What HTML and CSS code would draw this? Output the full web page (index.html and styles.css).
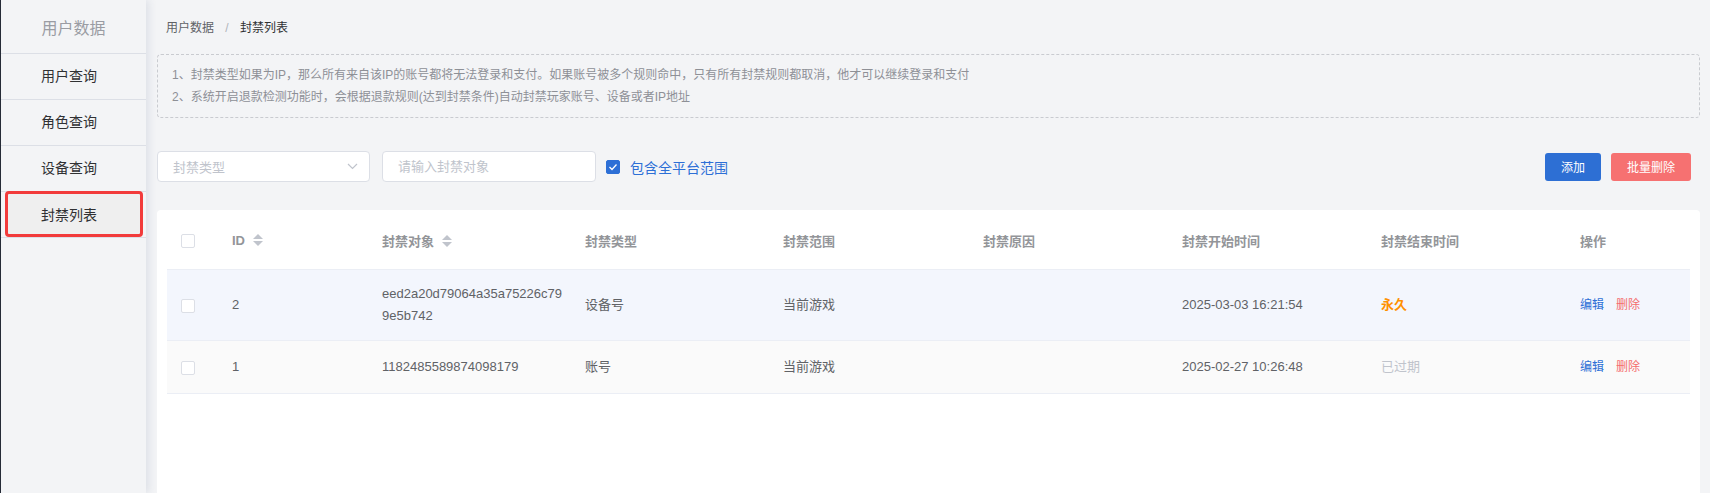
FILE: index.html
```html
<!DOCTYPE html>
<html lang="zh-CN">
<head>
    <meta charset="UTF-8">
    <meta name="viewport" content="width=device-width, initial-scale=1.0">
    <title>封禁列表</title>
    <link rel="stylesheet" href="styles.css">
</head>
<body>

<div class="layout">
    <aside class="sidebar">
        <div class="side-title">用户数据</div>
        <ul class="side-menu">
            <li>用户查询</li>
            <li>角色查询</li>
            <li>设备查询</li>
            <li class="active"><span>封禁列表</span></li>
        </ul>
    </aside>

    <main class="main">
        <div class="breadcrumb">
            <span class="crumb">用户数据</span>
            <span class="sep">/</span>
            <span class="crumb current">封禁列表</span>
        </div>

        <div class="notice">
            <p>1、封禁类型如果为IP，那么所有来自该IP的账号都将无法登录和支付。如果账号被多个规则命中，只有所有封禁规则都取消，他才可以继续登录和支付</p>
            <p>2、系统开启退款检测功能时，会根据退款规则(达到封禁条件)自动封禁玩家账号、设备或者IP地址</p>
        </div>

        <div class="filter">
            <div class="select">
                <span>封禁类型</span>
                <svg width="11" height="7" viewBox="0 0 11 7"><polyline points="1,1 5.5,5.5 10,1" fill="none" stroke="#c0c4cc" stroke-width="1.2"/></svg>
            </div>
            <input class="input" type="text" placeholder="请输入封禁对象">
            <label class="check">
                <span class="box checked">
                    <svg width="10" height="8" viewBox="0 0 10 8"><polyline points="1.5,4 4,6.5 8.5,1.5" fill="none" stroke="#fff" stroke-width="1.3"/></svg>
                </span>
                包含全平台范围
            </label>
            <div class="actions">
                <button class="btn primary">添加</button>
                <button class="btn danger">批量删除</button>
            </div>
        </div>

        <div class="card">
            <table class="table">
                <colgroup>
                    <col style="width:55px">
                    <col style="width:150px">
                    <col style="width:203px">
                    <col style="width:198px">
                    <col style="width:200px">
                    <col style="width:199px">
                    <col style="width:199px">
                    <col style="width:199px">
                    <col style="width:120px">
                </colgroup>
                <thead>
                    <tr>
                        <th class="cb"><span class="box"></span></th>
                        <th>ID <span class="sort"><i class="up"></i><i class="down"></i></span></th>
                        <th>封禁对象 <span class="sort"><i class="up"></i><i class="down"></i></span></th>
                        <th>封禁类型</th>
                        <th>封禁范围</th>
                        <th>封禁原因</th>
                        <th>封禁开始时间</th>
                        <th>封禁结束时间</th>
                        <th>操作</th>
                    </tr>
                </thead>
                <tbody>
                    <tr class="current-row">
                        <td class="cb"><span class="box"></span></td>
                        <td>2</td>
                        <td class="hash">eed2a20d79064a35a75226c799e5b742</td>
                        <td>设备号</td>
                        <td>当前游戏</td>
                        <td></td>
                        <td>2025-03-03 16:21:54</td>
                        <td class="forever">永久</td>
                        <td><a class="link edit">编辑</a><a class="link del">删除</a></td>
                    </tr>
                    <tr class="striped">
                        <td class="cb"><span class="box"></span></td>
                        <td>1</td>
                        <td class="hash">1182485589874098179</td>
                        <td>账号</td>
                        <td>当前游戏</td>
                        <td></td>
                        <td>2025-02-27 10:26:48</td>
                        <td class="expired">已过期</td>
                        <td><a class="link edit">编辑</a><a class="link del">删除</a></td>
                    </tr>
                </tbody>
            </table>
        </div>
    </main>
</div>

</body>
</html>
```

FILE: styles.css
```css
html, body {
    height: 100%;
}
body {
    margin: 0;
    padding: 0;
    font-family: "Liberation Sans", Arial, "Noto Sans CJK SC", sans-serif;
    background-color: #f3f4f6;
    color: #606266;
    overflow: hidden;
}

.layout {
    display: flex;
    height: 100%;
    border-left: 1px solid #262b36;
}

/* sidebar */
.sidebar {
    width: 145px;
    flex-shrink: 0;
    background-color: #f3f4f6;
    box-shadow: 3px 0 8px rgba(40, 60, 110, 0.1);
    position: relative;
    z-index: 1;
}
.side-title {
    height: 53px;
    line-height: 57px;
    text-align: center;
    font-size: 16px;
    color: #9a9ca3;
    border-bottom: 1px solid #dcdfe6;
}
.side-menu {
    list-style: none;
    margin: 0;
    padding: 0;
}
.side-menu li {
    height: 45px;
    line-height: 45px;
    padding-left: 40px;
    font-size: 14px;
    color: #303133;
    border-bottom: 1px solid #dcdfe6;
}
.side-menu li.active {
    padding: 0;
    height: 46px;
    margin-top: -1px;
}
.side-menu li.active span {
    display: block;
    margin: 0 3px 0 4px;
    height: 40px;
    line-height: 42px;
    padding-left: 33px;
    background-color: #efefef;
    border: 3px solid #f23b3b;
    border-radius: 4px;
}

/* main */
.main {
    flex: 1;
    padding: 0 10px 0 11px;
    min-width: 0;
}
.breadcrumb {
    height: 54px;
    line-height: 56px;
    padding-left: 9px;
    font-size: 12px;
}
.breadcrumb .crumb {
    color: #606266;
}
.breadcrumb .current {
    color: #303133;
}
.breadcrumb .sep {
    margin: 0 8px;
    color: #b0b3ba;
}

.notice {
    border: 1px dashed #c9cbd0;
    border-radius: 4px;
    padding: 9px 14px;
    font-size: 12px;
    line-height: 22px;
    color: #8e9096;
}
.notice p {
    margin: 0;
}

.filter {
    display: flex;
    align-items: center;
    margin-top: 33px;
    height: 31px;
    padding-right: 9px;
}
.select, .input {
    box-sizing: border-box;
    width: 213px;
    height: 31px;
    border: 1px solid #dcdfe6;
    border-radius: 4px;
    background-color: #fff;
    font-family: inherit;
    font-size: 13px;
    color: #c0c4cc;
}
.select {
    display: flex;
    align-items: center;
    justify-content: space-between;
    padding: 0 11px 0 15px;
}
.input {
    margin-left: 12px;
    width: 214px;
    padding: 0 15px;
    outline: none;
}
.input::placeholder {
    color: #c0c4cc;
}
.check {
    display: flex;
    align-items: center;
    margin-left: 10px;
    font-size: 14px;
    color: #2d6fd6;
}
.box {
    display: inline-block;
    box-sizing: border-box;
    width: 14px;
    height: 14px;
    border: 1px solid #dcdfe6;
    border-radius: 2px;
    background-color: #fff;
    vertical-align: middle;
}
.box.checked {
    display: flex;
    align-items: center;
    justify-content: center;
    background-color: #2d6fd6;
    border-color: #2d6fd6;
    margin-right: 10px;
}
.actions {
    margin-left: auto;
    display: flex;
    gap: 10px;
}
.btn {
    height: 28px;
    border: none;
    border-radius: 3px;
    color: #fff;
    font-family: inherit;
    font-size: 12px;
    cursor: pointer;
}
.btn.primary {
    width: 56px;
    background-color: #2d6fd4;
}
.btn.danger {
    width: 80px;
    background-color: #f67171;
}

/* table */
.card {
    margin-top: 28px;
    background-color: #fff;
    border-radius: 4px;
    padding: 0 10px;
    height: 400px;
}
.table {
    width: 100%;
    table-layout: fixed;
    border-collapse: collapse;
    font-size: 13px;
}
.table th {
    height: 24px;
    padding: 18px 10px 17px;
    text-align: left;
    font-weight: bold;
    color: #939599;
    border-bottom: 1px solid #ebeef5;
}
.table td {
    height: 26px;
    padding: 13px 10px;
    line-height: 22px;
    color: #606266;
    border-bottom: 1px solid #ebeef5;
    vertical-align: middle;
}
.table .cb {
    padding-left: 14px;
    padding-right: 0;
}
.table th.cb .box {
    margin-top: 2px;
}
.hash {
    word-break: break-all;
}
.current-row td {
    background-color: #f3f6fd;
}
.striped td {
    background-color: #fafafa;
}
.sort {
    display: inline-flex;
    flex-direction: column;
    gap: 2px;
    margin-left: 4px;
    vertical-align: middle;
    position: relative;
    top: -1px;
}
.sort i {
    display: block;
    width: 0;
    height: 0;
    border-left: 5px solid transparent;
    border-right: 5px solid transparent;
}
.sort i.up {
    border-bottom: 5px solid #c0c4cc;
}
.sort i.down {
    border-top: 5px solid #c0c4cc;
}
.forever {
    color: #ff9000 !important;
    font-weight: bold;
}
.expired {
    color: #c0c4cc !important;
}
.link {
    font-size: 12px;
    cursor: pointer;
}
.link.edit {
    color: #2d6fd6;
}
.link.del {
    color: #f56c6c;
    margin-left: 12px;
}
```
